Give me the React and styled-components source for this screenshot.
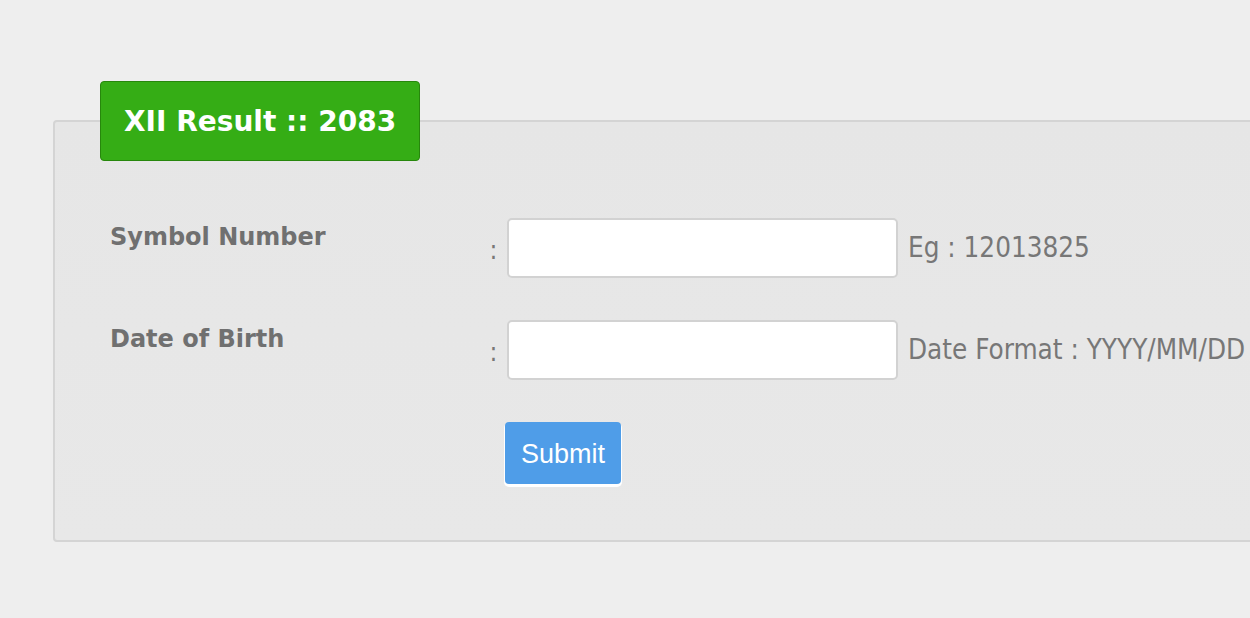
import React from "react";
import styled, { createGlobalStyle } from "styled-components";

const GlobalStyle = createGlobalStyle`
  html, body {
    margin: 0;
    padding: 0;
    background: #eeeeee;
    overflow: hidden;
  }
  body {
    font-family: "DejaVu Sans", Verdana, sans-serif;
  }
`;

const Page = styled.div`
  padding: 81px 0 0 53px;
  width: 1300px;
`;

const ResultBox = styled.fieldset`
  margin: 0;
  padding: 0 0 58px 45px;
  border: 2px solid #d4d4d4;
  border-radius: 4px;
  background: linear-gradient(180deg, #e6e6e6 0%, #e8e8e8 100%);
  min-width: 0;
`;

const Title = styled.legend`
  background: #35ad15;
  border: 1px solid #27870c;
  border-radius: 4px;
  color: #ffffff;
  font-family: "DejaVu Sans", Verdana, sans-serif;
  font-weight: bold;
  font-size: 28px;
  padding: 0 23px;
  height: 80px;
  line-height: 80px;
  box-sizing: border-box;
`;

const Form = styled.form`
  display: grid;
  grid-template-columns: 370px 27px 391px auto;
  grid-auto-rows: 60px;
  row-gap: 42px;
  padding: 57px 0 0 10px;
  align-items: start;
`;

const Label = styled.label`
  font-family: "DejaVu Sans", Verdana, sans-serif;
  font-weight: bold;
  font-size: 24px;
  line-height: 30px;
  color: #707070;
  padding-top: 4px;
`;

const Colon = styled.span`
  font-family: "DejaVu Sans Condensed", "DejaVu Sans", sans-serif;
  font-size: 26px;
  color: #777777;
  line-height: 60px;
  padding-top: 2px;
  text-align: center;
`;

const Input = styled.input`
  box-sizing: border-box;
  width: 391px;
  height: 60px;
  border: 2px solid #d2d2d2;
  border-radius: 5px;
  background: #ffffff;
  margin: 0;
  font-size: 22px;
  padding: 0 10px;
  outline: none;
`;

const Hint = styled.span`
  font-family: "DejaVu Sans Condensed", "DejaVu Sans", sans-serif;
  font-size: 27.6px;
  color: #777777;
  line-height: 60px;
  padding-left: 10px;
  white-space: nowrap;
`;

const Submit = styled.button`
  grid-column: 3;
  justify-self: start;
  margin-left: -2px;
  height: 62px;
  padding: 2px 16px 0;
  background: #4f9de8;
  color: #ffffff;
  font-family: "Liberation Sans", Arial, sans-serif;
  font-size: 27px;
  border: none;
  border-radius: 4px;
  box-shadow: 0 2px 0 1px #ffffff;
  cursor: pointer;
`;

export default function App() {
  return (
    <>
      <GlobalStyle />
      <Page>
        <ResultBox>
          <Title>XII Result :: 2083</Title>
          <Form onSubmit={(e) => e.preventDefault()}>
            <Label htmlFor="symbol">Symbol Number</Label>
            <Colon>:</Colon>
            <Input id="symbol" type="text" />
            <Hint>Eg : 12013825</Hint>

            <Label htmlFor="dob">Date of Birth</Label>
            <Colon>:</Colon>
            <Input id="dob" type="text" />
            <Hint>Date Format : YYYY/MM/DD</Hint>

            <Submit type="submit">Submit</Submit>
          </Form>
        </ResultBox>
      </Page>
    </>
  );
}
